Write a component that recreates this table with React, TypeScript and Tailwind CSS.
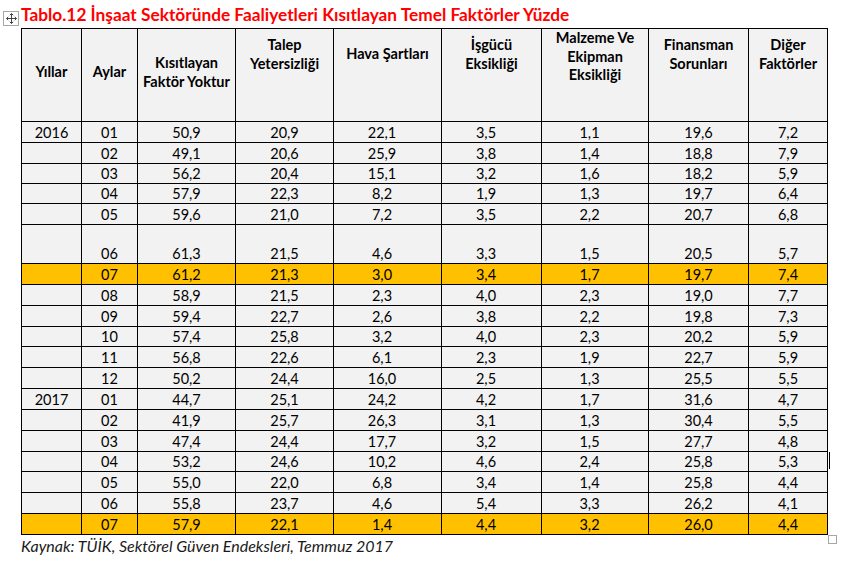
const rows2016 = [
  ['01', '50,9', '20,9', '22,1', '3,5', '1,1', '19,6', '7,2'],
  ['02', '49,1', '20,6', '25,9', '3,8', '1,4', '18,8', '7,9'],
  ['03', '56,2', '20,4', '15,1', '3,2', '1,6', '18,2', '5,9'],
  ['04', '57,9', '22,3', '8,2', '1,9', '1,3', '19,7', '6,4'],
  ['05', '59,6', '21,0', '7,2', '3,5', '2,2', '20,7', '6,8'],
  ['06', '61,3', '21,5', '4,6', '3,3', '1,5', '20,5', '5,7'],
  ['07', '61,2', '21,3', '3,0', '3,4', '1,7', '19,7', '7,4'],
  ['08', '58,9', '21,5', '2,3', '4,0', '2,3', '19,0', '7,7'],
  ['09', '59,4', '22,7', '2,6', '3,8', '2,2', '19,8', '7,3'],
  ['10', '57,4', '25,8', '3,2', '4,0', '2,3', '20,2', '5,9'],
  ['11', '56,8', '22,6', '6,1', '2,3', '1,9', '22,7', '5,9'],
  ['12', '50,2', '24,4', '16,0', '2,5', '1,3', '25,5', '5,5'],
];

const rows2017 = [
  ['01', '44,7', '25,1', '24,2', '4,2', '1,7', '31,6', '4,7'],
  ['02', '41,9', '25,7', '26,3', '3,1', '1,3', '30,4', '5,5'],
  ['03', '47,4', '24,4', '17,7', '3,2', '1,5', '27,7', '4,8'],
  ['04', '53,2', '24,6', '10,2', '4,6', '2,4', '25,8', '5,3'],
  ['05', '55,0', '22,0', '6,8', '3,4', '1,4', '25,8', '4,4'],
  ['06', '55,8', '23,7', '4,6', '5,4', '3,3', '26,2', '4,1'],
  ['07', '57,9', '22,1', '1,4', '4,4', '3,2', '26,0', '4,4'],
];

const tableRows = [
  ...rows2016.map((r, i) => ({ year: i === 0 ? '2016' : '', cells: r })),
  ...rows2017.map((r, i) => ({ year: i === 0 ? '2017' : '', cells: r })),
];

const rowHeights = [
  'h-[21px]', 'h-[21px]', 'h-[20px]', 'h-[20px]', 'h-[21px]', 'h-[39px]',
  'h-[21px]', 'h-[21px]', 'h-[21px]', 'h-[20px]', 'h-[21px]', 'h-[21px]', 'h-[21px]',
  'h-[21px]', 'h-[21px]', 'h-[20px]', 'h-[21px]', 'h-[21px]', 'h-[21px]',
];

// header cells sit at different heights, as in the Word original
const headers = [
  { label: ['Yıllar'], pad: 'pt-[34px]' },
  { label: ['Aylar'], pad: 'pt-[34px]' },
  { label: ['Kısıtlayan', 'Faktör Yoktur'], pad: 'pt-[25px]' },
  { label: ['Talep', 'Yetersizliği'], pad: 'pt-[7px]' },
  { label: ['Hava Şartları'], pad: 'pt-[16px]' },
  { label: ['İşgücü', 'Eksikliği'], pad: 'pt-[7px]' },
  { label: ['Malzeme Ve', 'Ekipman', 'Eksikliği'], pad: 'pt-0' },
  { label: ['Finansman', 'Sorunları'], pad: 'pt-[7px]' },
  { label: ['Diğer', 'Faktörler'], pad: 'pt-[7px]' },
];

const widths = ['w-[60px]', 'w-[56px]', 'w-[98px]', 'w-[98px]', 'w-[108px]', 'w-[100px]', 'w-[107px]', 'w-[100px]', 'w-[79px]'];

function MoveHandle() {
  return (
    <div className="absolute left-[3px] top-[11px] w-[16px] h-[15px] border border-[#a6a6a6] bg-white flex items-center justify-center">
      <svg width="11" height="11" viewBox="0 0 11 11" fill="none" stroke="#444" strokeWidth="1">
        <path d="M5.5 0.5v10M0.5 5.5h10" />
        <path d="M3.8 2.2l1.7-1.7 1.7 1.7M3.8 8.8l1.7 1.7 1.7-1.7M2.2 3.8l-1.7 1.7 1.7 1.7M8.8 3.8l1.7 1.7-1.7 1.7" />
      </svg>
    </div>
  );
}

export default function App() {
  return (
    <div className="relative w-[844px] h-[561px] bg-white overflow-hidden font-['Lato','Liberation_Sans',sans-serif] text-black">
      <MoveHandle />
      <div className="pl-[21px]">
        <div className="h-[28px] pt-[5px] text-[17.3px] leading-[20px] font-bold text-[#f00] whitespace-nowrap">
          Tablo.12 İnşaat Sektöründe Faaliyetleri Kısıtlayan Temel Faktörler Yüzde
        </div>
        <table className="border-collapse table-fixed w-[807px] text-[14.5px] leading-[19px]">
          <colgroup>
            {widths.map((w, i) => (
              <col key={i} className={w} />
            ))}
          </colgroup>
          <thead>
            <tr className="h-[93px] bg-[#f2f2f2]">
              {headers.map((h, i) => (
                <th
                  key={i}
                  className={`border border-black font-bold text-center align-top leading-[18.6px] px-0 pb-0 ${h.pad}`}
                >
                  {h.label.map((l, j) => (
                    <div key={j}>{l}</div>
                  ))}
                </th>
              ))}
            </tr>
          </thead>
          <tbody>
            {tableRows.map((row, i) => {
              const orange = row.cells[0] === '07';
              return (
                <tr key={i} className={`${orange ? 'bg-[#ffc000]' : 'bg-[#f2f2f2]'} ${rowHeights[i]}`}>
                  <td className="border border-black text-center p-0 align-bottom">{row.year}</td>
                  {row.cells.map((c, j) => (
                    <td
                      key={j}
                      className={`border border-black text-center p-0 align-bottom ${j >= 3 && j <= 5 ? 'pr-[11px]' : ''}`}
                    >
                      {c}
                    </td>
                  ))}
                </tr>
              );
            })}
          </tbody>
        </table>
        <div className="pt-[1px] text-[16px] leading-[20px] italic text-[#1a1a1a]">
          Kaynak: TÜİK, Sektörel Güven Endeksleri, Temmuz 2017
        </div>
      </div>
      <div className="absolute left-[829px] top-[452px] w-px h-[17px] bg-black" />
      <div className="absolute left-[828px] top-[535px] w-[9px] h-[9px] border border-[#a6a6a6]" />
    </div>
  );
}
